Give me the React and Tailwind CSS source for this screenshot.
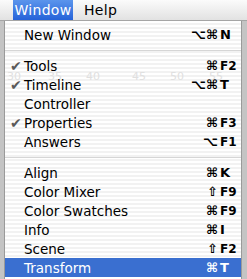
import React from 'react';

const items = [
  { label: 'New Window', mods: '⌥⌘', key: 'N' },
  'sep',
  { label: 'Tools', check: true, mods: '⌘', key: 'F2' },
  { label: 'Timeline', check: true, mods: '⌥⌘', key: 'T' },
  { label: 'Controller' },
  { label: 'Properties', check: true, mods: '⌘', key: 'F3' },
  { label: 'Answers', mods: '⌥', key: 'F1' },
  'sep',
  { label: 'Align', mods: '⌘', key: 'K' },
  { label: 'Color Mixer', mods: '⇧', key: 'F9' },
  { label: 'Color Swatches', mods: '⌘', key: 'F9' },
  { label: 'Info', mods: '⌘', key: 'I' },
  { label: 'Scene', mods: '⇧', key: 'F2' },
  { label: 'Transform', mods: '⌘', key: 'T', active: true },
];

function Row({ item }) {
  const fkey = item.key && item.key.length > 1;
  return (
    <div
      className={`flex items-center h-[19px] ${item.active ? 'bg-[#3a6fd0] text-white' : 'text-black'}`}
    >
      <span className={`w-[19px] pl-[5px] text-[14px] leading-none ${item.active ? 'text-white' : 'text-[#5a5a5a]'}`}>
        {item.check ? '✔' : ''}
      </span>
      <span className="flex-1 text-[13.5px] pt-[1px]">{item.label}</span>
      {item.key && (
        <span className="flex items-center">
          <span className="text-[13px] font-bold text-right">{item.mods}</span>
          <span className={`w-[23px] pl-[2px] font-bold ${fkey ? 'text-[12px]' : 'text-[13px]'}`}>
            {item.key}
          </span>
        </span>
      )}
    </div>
  );
}

export default function App() {
  return (
    <div className="w-[247px] h-[279px] overflow-hidden bg-[#c4c4c4] font-['DejaVu_Sans',sans-serif] flex flex-col">
      {/* menu bar */}
      <div className="h-[21px] flex items-stretch bg-gradient-to-b from-[#fbfbfb] to-[#e2e2e2] border-b border-[#a5a5a5] text-[14px]">
        <div className="w-[13px]" />
        <div className="w-[60px] flex items-center justify-center tracking-[0.3px] bg-gradient-to-b from-[#5b95ec] to-[#2562d8] text-white">Window</div>
        <div className="pl-[11px] flex items-center tracking-[0.3px] text-black">Help</div>
      </div>
      {/* dropdown */}
      <div className="relative flex-1 ml-[4px] mr-[5px] border-l border-r border-[#9a9a9a] pt-[4px] bg-[repeating-linear-gradient(0deg,#ffffff_0px,#ffffff_2px,#f2f2f2_2px,#f2f2f2_4px)]">
        <div className="absolute left-0 right-0 top-[50px] flex text-[11px] leading-[12px] text-[#e0e0e0] pointer-events-none">
          <span className="ml-[2px]">30</span>
          <span className="ml-[27px]">35</span>
          <span className="ml-[24px]">40</span>
          <span className="ml-[32px]">45</span>
          <span className="ml-[24px]">50</span>
          <span className="ml-[25px]">55</span>
        </div>
        <div className="relative flex flex-col">
          {items.map((it, i) =>
            it === 'sep' ? (
              <div key={i} className="h-[12px] flex items-center">
                <div className="w-full h-px bg-[#d6d6d6]" />
              </div>
            ) : (
              <Row key={i} item={it} />
            )
          )}
        </div>
      </div>
    </div>
  );
}
